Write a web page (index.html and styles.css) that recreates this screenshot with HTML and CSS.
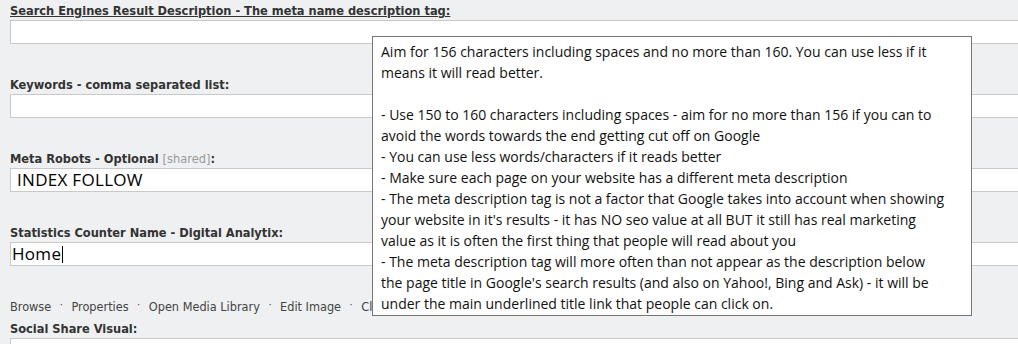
FILE: index.html
```html
<!DOCTYPE html>
<html>
<head>
<meta charset="utf-8">
<link rel="stylesheet" href="styles.css">
</head>
<body>
<div class="form">
  <div class="field">
    <div class="label"><span class="u">Search Engines Result Description - The meta name description tag:</span></div>
    <div class="input"></div>
  </div>
  <div class="field">
    <div class="label">Keywords - comma separated list:</div>
    <div class="input"></div>
  </div>
  <div class="field">
    <div class="label">Meta Robots - Optional <span class="shared">[shared]</span>:</div>
    <div class="input select"><span class="value">INDEX FOLLOW</span></div>
  </div>
  <div class="field">
    <div class="label">Statistics Counter Name - Digital Analytix:</div>
    <div class="input focus"><span class="value">Home</span><span class="caret"></span></div>
  </div>
  <div class="links">
    <span>Browse</span><span class="dot">·</span><span>Properties</span><span class="dot">·</span><span>Open Media Library</span><span class="dot">·</span><span>Edit Image</span><span class="dot">·</span><span>Clear</span>
  </div>
  <div class="field last">
    <div class="label">Social Share Visual:</div>
    <div class="input"></div>
  </div>
</div>
<div class="tooltip">
  <div class="line">Aim for 156 characters including spaces and no more than 160. You can use less if it</div>
  <div class="line">means it will read better.</div>
  <div class="line blank"></div>
  <div class="line">- Use 150 to 160 characters including spaces - aim for no more than 156 if you can to</div>
  <div class="line">avoid the words towards the end getting cut off on Google</div>
  <div class="line">- You can use less words/characters if it reads better</div>
  <div class="line">- Make sure each page on your website has a different meta description</div>
  <div class="line">- The meta description tag is not a factor that Google takes into account when showing</div>
  <div class="line">your website in it's results - it has NO seo value at all BUT it still has real marketing</div>
  <div class="line">value as it is often the first thing that people will read about you</div>
  <div class="line">- The meta description tag will more often than not appear as the description below</div>
  <div class="line">the page title in Google's search results (and also on Yahoo!, Bing and Ask) - it will be</div>
  <div class="line">under the main underlined title link that people can click on.</div>
</div>
</body>
</html>
```
FILE: styles.css
```css
html, body {
  margin: 0;
  padding: 0;
  overflow: hidden;
}
body {
  background: #eff0f1;
  width: 1018px;
  height: 344px;
  position: relative;
}
.form {
  padding: 3px 0 0 10px;
}
.field {
  margin-bottom: 33px;
}
.field.last {
  margin-bottom: 0;
}
.label {
  font-family: "DejaVu Sans Condensed", "DejaVu Sans", sans-serif;
  font-weight: bold;
  font-size: 12.7px;
  line-height: 16px;
  height: 16px;
  color: #333333;
  white-space: nowrap;
}
.label .u {
  text-decoration: underline;
}
.label .shared {
  font-weight: normal;
  color: #9a9a9a;
}
.input {
  margin-top: 1px;
  height: 24px;
  box-sizing: border-box;
  width: 1008px;
  background: #ffffff;
  border: 1px solid #c9c9c9;
  border-right: none;
  font-family: "Open Sans", sans-serif;
  font-size: 17px;
  line-height: 22px;
  letter-spacing: 0.3px;
  color: #000;
  display: flex;
  align-items: center;
  overflow: hidden;
}
.input.select .value {
  padding-left: 6px;
}
.input.focus .value {
  padding-left: 1px;
}
.caret {
  display: inline-block;
  width: 1px;
  height: 17px;
  background: #000;
  margin-left: 1px;
}
.links {
  font-family: "DejaVu Sans Condensed", "DejaVu Sans", sans-serif;
  font-size: 12.6px;
  line-height: 16px;
  color: #444;
  white-space: nowrap;
  margin-bottom: 5px;
}
.links .dot {
  display: inline-block;
  padding: 0 8.5px;
  position: relative;
  top: -3px;
  font-size: 11px;
}
.tooltip {
  position: absolute;
  left: 372px;
  top: 36px;
  width: 600px;
  height: 280px;
  box-sizing: border-box;
  background: #fff;
  border: 1px solid #767676;
  padding: 4px 8px 0 8px;
  font-family: "Open Sans", sans-serif;
  font-size: 14px;
  line-height: 21px;
  color: #111;
  white-space: nowrap;
  overflow: hidden;
}
.tooltip .line {
  height: 21px;
}
```
